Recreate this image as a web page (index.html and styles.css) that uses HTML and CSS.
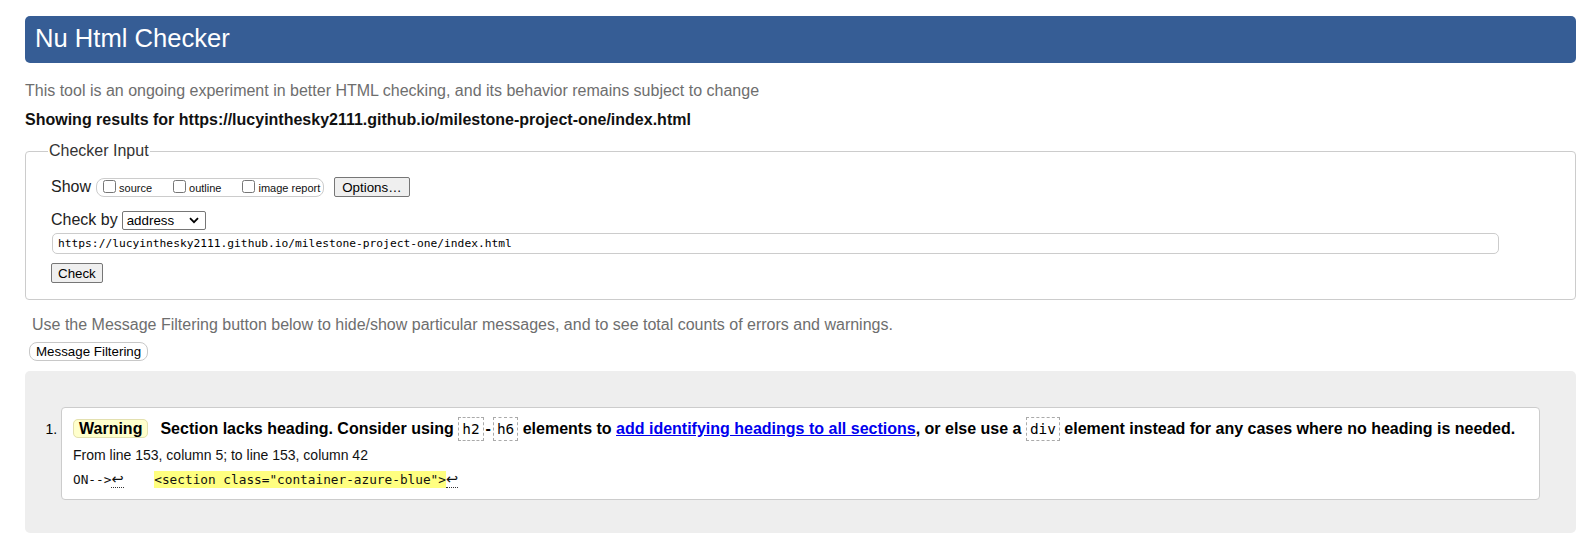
FILE: index.html
```html
<!DOCTYPE html>
<html lang="en">
<head>
<meta charset="utf-8">
<title>Nu Html Checker</title>
<link rel="stylesheet" href="styles.css">
</head>
<body>
<h1 class="title">Nu Html Checker</h1>
<p class="about">This tool is an ongoing experiment in better HTML checking, and its behavior remains subject to change</p>
<p class="results-for">Showing results for https://lucyinthesky2111.github.io/milestone-project-one/index.html</p>
<form class="checker">
  <fieldset class="input-set">
    <legend class="legend">Checker Input</legend>
    <div class="row show-row">
      <span class="row-label">Show</span>
      <span class="opts">
        <label class="opt"><input type="checkbox" class="cb">source</label>
        <label class="opt"><input type="checkbox" class="cb">outline</label>
        <label class="opt"><input type="checkbox" class="cb">image report</label>
      </span>
      <button type="button" class="btn options">Options…</button>
    </div>
    <div class="row by-row">
      <span class="row-label">Check by</span>
      <span class="sel"><span class="sel-text">address</span><svg class="chev" width="10" height="7" viewBox="0 0 10 7"><path d="M1 1.2 L5 5.2 L9 1.2" fill="none" stroke="#000" stroke-width="1.8"/></svg></span>
    </div>
    <input class="url" type="text" value="https://lucyinthesky2111.github.io/milestone-project-one/index.html">
    <div class="submit-row"><button type="button" class="btn">Check</button></div>
  </fieldset>
</form>
<p class="filter-note">Use the Message Filtering button below to hide/show particular messages, and to see total counts of errors and warnings.</p>
<button type="button" class="filter-btn">Message Filtering</button>
<div class="results">
  <ol class="messages">
    <li class="msg">
      <p class="msg-head"><span class="badge">Warning</span>Section lacks heading. Consider using <code class="kw">h2</code><span class="dash">-</span><code class="kw">h6</code> elements to <a class="link" href="#">add identifying headings to all sections</a>, or else use a <code class="kw">div</code> element instead for any cases where no heading is needed.</p>
      <p class="loc">From line 153, column 5; to line 153, column 42</p>
      <p class="extract"><code class="ext">ON--&gt;<span class="lf">↩</span>    <b class="hl">&lt;section class="container-azure-blue"&gt;</b><span class="lf">↩</span></code></p>
    </li>
  </ol>
</div>
</body>
</html>
```
FILE: styles.css
```css
* { box-sizing: border-box; }

body {
  margin: 0;
  padding: 16px 15px 0 25px;
  font-family: "Liberation Sans", Arial, sans-serif;
  font-size: 16px;
  color: #000;
  background: #fff;
}

.title {
  margin: 0;
  height: 47px;
  padding: 0 0 3px 10px;
  line-height: 44px;
  font-size: 25.6px;
  font-weight: normal;
  color: #fff;
  background: #365d95;
  border-radius: 5px;
}

.about {
  margin: 19px 0 0;
  color: #6e6e6e;
}

.results-for {
  margin: 11px 0 0;
  font-weight: bold;
  color: #111;
}

.checker { margin: 13px 0 0; }

.input-set {
  margin: 0;
  padding: 17px 0 16px 25px;
  border: 1px solid #cccccc;
  border-radius: 4px;
  min-width: 0;
}

.legend {
  padding: 0 1px;
  margin-left: -3px;
  color: #333;
  font-size: 16px;
}

.row {
  display: flex;
  align-items: center;
}

.row-label { color: #222; }

.show-row { height: 20px; }

.opts {
  display: inline-flex;
  align-items: center;
  height: 19px;
  margin-left: 5px;
  padding: 0 3px 0 2px;
  border: 1px solid #cccccc;
  border-radius: 8px;
  font-size: 11px;
  color: #111;
}

.opt {
  display: inline-flex;
  align-items: center;
  margin-right: 17px;
  padding-top: 2px;
}

.opt:last-child { margin-right: 0; }

.cb {
  width: 13px;
  height: 13px;
  margin: -3px 3px 0 4px;
}

.btn {
  height: 20px;
  padding: 1px 6px;
  font-family: "Liberation Sans", Arial, sans-serif;
  font-size: 13.333px;
  color: #000;
  background: #efefef;
  border: 1px solid #767676;
  border-radius: 2px;
}

.options { margin-left: 10px; padding: 1px 7px; }

.by-row {
  margin-top: 14px;
  height: 18px;
}

.sel {
  display: inline-flex;
  align-items: center;
  justify-content: space-between;
  width: 84px;
  height: 19px;
  margin-left: 4px;
  padding: 0 6px 0 4px;
  border: 1px solid #767676;
  border-radius: 2px;
  font-size: 13.333px;
  background: #fff;
}

.chev { display: block; }

.url {
  display: block;
  width: 1447px;
  height: 21px;
  margin: 4px 0 0 1px;
  padding: 0 5px;
  border: 1px solid #cccccc;
  border-radius: 5px;
  font-family: "DejaVu Sans Mono", "Liberation Mono", monospace;
  font-size: 11.25px;
  color: #000;
  background: #fff;
}

.submit-row { margin-top: 9px; display: flex; }

.filter-note {
  margin: 16px 0 0;
  padding-left: 7px;
  color: #6e6e6e;
}

.filter-btn {
  display: block;
  height: 19px;
  margin: 8px 0 0 4px;
  padding: 0 6px;
  font-family: "Liberation Sans", Arial, sans-serif;
  font-size: 13.333px;
  color: #000;
  background: #fff;
  border: 1px solid #c8c8c8;
  border-radius: 8px;
}

.results {
  margin-top: 10px;
  padding: 36px 36px 33px 36px;
  background: #eeeeee;
  border-radius: 5px;
}

.messages {
  margin: 0;
  padding: 0;
  font-size: 14px;
}

.msg {
  padding: 12px 11px 11px 11px;
  background: #fff;
  border: 1px solid #cccccc;
  border-radius: 4px;
}

.msg-head {
  margin: 0;
  font-size: 16px;
  font-weight: bold;
  color: #000;
  white-space: nowrap;
}

.badge {
  padding: 0 5px;
  margin-right: 12px;
  background: #ffffcc;
  border: 1px solid #e3e0b0;
  border-radius: 5px;
}

.kw {
  font-family: "DejaVu Sans Mono", "Liberation Mono", monospace;
  font-size: 14.4px;
  font-weight: normal;
  padding: 3px 3px;
  margin: 0;
  border: 1px dashed #aaaaaa;
}

.dash { margin: 0 2px; }

.link { color: #0000ee; text-decoration: underline; }

.loc {
  margin: 9px 0 0;
  font-size: 14px;
  color: #111;
}

.extract {
  margin: 8px 0 0;
  line-height: 17px;
  white-space: pre;
}

.ext {
  font-family: "DejaVu Sans Mono", "Liberation Mono", monospace;
  font-size: 12.75px;
  color: #111;
}

.hl {
  font-weight: normal;
  padding: 1px 0;
  background: #ffff80;
}

.lf {
  font-family: "DejaVu Sans", sans-serif;
  font-size: 14.5px;
  border-bottom: 1px dotted #333;
}
```
